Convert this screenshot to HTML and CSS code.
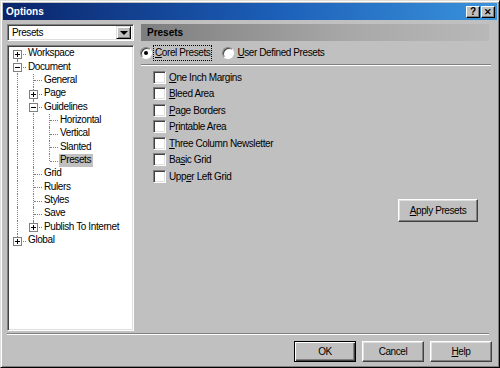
FILE: index.html
```html
<!DOCTYPE html>
<html lang="en">
  <head>
    <meta charset="UTF-8" />
    <meta name="viewport" content="width=device-width, initial-scale=1.0" />
    <title>Options</title>
    <link rel="stylesheet" href="styles.css">
  </head>
  <body>
    <div class="window">
      <div class="titlebar">
        <span class="title">Options</span>
        <div class="caption-btns">
          <span class="cap-btn">?</span>
          <span class="cap-btn cap-close">&#x2715;</span>
        </div>
      </div>

      <div class="content">
        <div class="main">
          <div class="left">
            <div class="combo">
              <span class="combo-text">Presets</span>
              <span class="combo-arrow"><span class="tri"></span></span>
            </div>

            <div class="tree">
              <div class="row"><span class="cell tee first"><span class="box plus"></span></span><span class="label">Workspace</span></div>
              <div class="row"><span class="cell tee"><span class="box minus"></span></span><span class="label">Document</span></div>
              <div class="row"><span class="cell pipe"></span><span class="cell tee"></span><span class="label">General</span></div>
              <div class="row"><span class="cell pipe"></span><span class="cell tee"><span class="box plus"></span></span><span class="label">Page</span></div>
              <div class="row"><span class="cell pipe"></span><span class="cell tee"><span class="box minus"></span></span><span class="label">Guidelines</span></div>
              <div class="row"><span class="cell pipe"></span><span class="cell pipe"></span><span class="cell tee"></span><span class="label">Horizontal</span></div>
              <div class="row"><span class="cell pipe"></span><span class="cell pipe"></span><span class="cell tee"></span><span class="label">Vertical</span></div>
              <div class="row"><span class="cell pipe"></span><span class="cell pipe"></span><span class="cell tee"></span><span class="label">Slanted</span></div>
              <div class="row"><span class="cell pipe"></span><span class="cell pipe"></span><span class="cell end"></span><span class="label selected">Presets</span></div>
              <div class="row"><span class="cell pipe"></span><span class="cell tee"></span><span class="label">Grid</span></div>
              <div class="row"><span class="cell pipe"></span><span class="cell tee"></span><span class="label">Rulers</span></div>
              <div class="row"><span class="cell pipe"></span><span class="cell tee"></span><span class="label">Styles</span></div>
              <div class="row"><span class="cell pipe"></span><span class="cell tee"></span><span class="label">Save</span></div>
              <div class="row"><span class="cell pipe"></span><span class="cell end"><span class="box plus"></span></span><span class="label">Publish To Internet</span></div>
              <div class="row"><span class="cell end"><span class="box plus"></span></span><span class="label">Global</span></div>
            </div>
          </div>

          <div class="right">
            <div class="panel-header">Presets</div>

            <div class="radio-row">
              <label class="radio">
                <span class="radio-circle checked"></span>
                <span class="radio-text focused"><u>C</u>orel Presets</span>
              </label>
              <label class="radio">
                <span class="radio-circle"></span>
                <span class="radio-text"><u>U</u>ser Defined Presets</span>
              </label>
            </div>

            <div class="sep"></div>

            <ul class="check-list">
              <li><span class="checkbox"></span><span><u>O</u>ne Inch Margins</span></li>
              <li><span class="checkbox"></span><span><u>B</u>leed Area</span></li>
              <li><span class="checkbox"></span><span><u>P</u>age Borders</span></li>
              <li><span class="checkbox"></span><span>P<u>r</u>intable Area</span></li>
              <li><span class="checkbox"></span><span><u>T</u>hree Column Newsletter</span></li>
              <li><span class="checkbox"></span><span>Ba<u>s</u>ic Grid</span></li>
              <li><span class="checkbox"></span><span>Upp<u>e</u>r Left Grid</span></li>
            </ul>

            <div class="apply-row">
              <button class="btn apply-btn"><u>A</u>pply Presets</button>
            </div>
          </div>
        </div>

        <div class="sep footer-sep"></div>

        <div class="footer">
          <button class="btn default-btn">OK</button>
          <button class="btn">Cancel</button>
          <button class="btn"><u>H</u>elp</button>
        </div>
      </div>
    </div>
  </body>
</html>
```

FILE: styles.css
```css
body {
  margin: 0;
  padding: 0;
  background: #c0c0c0;
  font-family: "Liberation Sans", Arial, sans-serif;
  font-size: 10px;
  letter-spacing: -0.4px;
  color: #000;
}

.window {
  width: 500px;
  height: 368px;
  box-sizing: border-box;
  background: #c0c0c0;
  border: 1px solid;
  border-color: #dfdfdf #000 #000 #dfdfdf;
  box-shadow: inset 1px 1px #fff, inset -1px -1px #808080;
  padding: 2px;
  display: flex;
  flex-direction: column;
}

.titlebar {
  height: 17px;
  background: linear-gradient(to right, #0a246a, #1c5fb8 55%, #3a93dc);
  display: flex;
  align-items: center;
  justify-content: space-between;
  padding: 0 2px 0 2px;
}

.title {
  color: #fff;
  font-weight: bold;
  letter-spacing: 0;
  padding-left: 1px;
}

.caption-btns {
  display: flex;
}

.cap-btn {
  width: 14px;
  height: 12px;
  box-sizing: border-box;
  background: #c0c0c0;
  border: 1px solid;
  border-color: #fff #000 #000 #fff;
  box-shadow: inset -1px -1px #808080;
  font-size: 10px;
  font-weight: bold;
  line-height: 10px;
  text-align: center;
  letter-spacing: 0;
}

.cap-close {
  margin-left: 1px;
  font-size: 9px;
}

.content {
  flex: 1;
  display: flex;
  flex-direction: column;
  padding: 4px 6px 0 4px;
}

.main {
  display: flex;
  gap: 7px;
  height: 307px;
}

.left {
  width: 127px;
  display: flex;
  flex-direction: column;
  gap: 4px;
}

/* sunken controls */
.combo,
.tree {
  box-sizing: border-box;
  background: #fff;
  border: 1px solid;
  border-color: #808080 #fff #fff #808080;
  box-shadow: inset 1px 1px #404040, inset -1px -1px #dfdfdf;
}

.combo {
  height: 17px;
  display: flex;
  align-items: center;
  padding: 2px;
}

.combo-text {
  flex: 1;
  padding-left: 2px;
}

.combo-arrow {
  width: 15px;
  height: 13px;
  box-sizing: border-box;
  background: #c0c0c0;
  border: 1px solid;
  border-color: #dfdfdf #000 #000 #dfdfdf;
  box-shadow: inset 1px 1px #fff, inset -1px -1px #808080;
  display: flex;
  align-items: center;
  justify-content: center;
}

.tri {
  width: 0;
  height: 0;
  border-left: 4px solid transparent;
  border-right: 4px solid transparent;
  border-top: 4px solid #000;
}

.tree {
  flex: 1;
  padding: 1px 2px;
}

.row {
  height: 13.36px;
  display: flex;
  align-items: center;
  white-space: nowrap;
}

.cell {
  position: relative;
  width: 16px;
  height: 100%;
  flex: none;
}

.cell::before,
.cell::after {
  content: "";
  position: absolute;
}

.pipe::before,
.tee::before {
  left: 7px;
  top: 0;
  bottom: 0;
  border-left: 1px dotted #808080;
}

.tee.first::before {
  top: 50%;
}

.end::before {
  left: 7px;
  top: 0;
  height: 50%;
  border-left: 1px dotted #808080;
}

.tee::after,
.end::after {
  left: 8px;
  top: 50%;
  width: 8px;
  border-top: 1px dotted #808080;
}

.box {
  position: absolute;
  left: 3px;
  top: calc(50% - 4px);
  width: 9px;
  height: 9px;
  box-sizing: border-box;
  background: #fff;
  border: 1px solid #808080;
  z-index: 1;
}

.box::before,
.box::after {
  content: "";
  position: absolute;
  background: #000;
}

.box::before {
  left: 1px;
  top: 3px;
  width: 5px;
  height: 1px;
}

.plus::after {
  left: 3px;
  top: 1px;
  width: 1px;
  height: 5px;
}

.label {
  margin-left: 1px;
  padding: 0 2px 1px 1px;
  line-height: 12px;
}

.selected {
  background: #c0c0c0;
}

.right {
  flex: 1;
  display: flex;
  flex-direction: column;
}

.panel-header {
  height: 17px;
  margin-right: 2px;
  background: linear-gradient(to right, #7e7e7e, #a8a8a8 60%, #b8b8b8);
  font-weight: bold;
  letter-spacing: 0;
  line-height: 17px;
  padding-left: 6px;
}

.radio-row {
  display: flex;
  gap: 10px;
  height: 16px;
  margin-top: 4px;
  margin-left: -1px;
}

.radio {
  display: flex;
  align-items: center;
  gap: 1px;
}

.radio-circle {
  width: 12px;
  height: 12px;
  box-sizing: border-box;
  border-radius: 50%;
  background: #fff;
  border: 1px solid;
  border-color: #808080 #fff #fff #808080;
  box-shadow: inset 1px 1px #404040;
  display: flex;
  align-items: center;
  justify-content: center;
}

.radio-circle.checked::after {
  content: "";
  width: 4px;
  height: 4px;
  border-radius: 50%;
  background: #000;
}

.radio-text {
  padding: 1px 1px 2px 1px;
  border: 1px solid transparent;
}

.focused {
  border: 1px dotted #000;
}

.sep {
  height: 0;
  border-top: 1px solid #808080;
  border-bottom: 1px solid #fff;
}

.right .sep {
  margin-top: 3px;
}

.check-list {
  list-style: none;
  margin: 3px 0 0 0;
  padding: 0 0 0 12px;
}

.check-list li {
  height: 16.5px;
  display: flex;
  align-items: center;
  gap: 3px;
}

.checkbox {
  width: 13px;
  height: 13px;
  box-sizing: border-box;
  background: #fff;
  border: 1px solid;
  border-color: #808080 #fff #fff #808080;
  box-shadow: inset 1px 1px #404040, inset -1px -1px #dfdfdf;
}

.apply-row {
  display: flex;
  justify-content: flex-end;
  margin-top: 14px;
  padding-right: 13px;
}

.btn {
  font-family: "Liberation Sans", Arial, sans-serif;
  font-size: 10px;
  letter-spacing: -0.4px;
  color: #000;
  background: #c0c0c0;
  border: 1px solid;
  border-color: #fff #404040 #404040 #fff;
  box-shadow: inset -1px -1px #808080, inset 1px 1px #dfdfdf;
  padding: 0;
  height: 21px;
  width: 62px;
}

.apply-btn {
  width: 80px;
  height: 23px;
}

.footer-sep {
  margin-top: 2px;
  margin-right: 2px;
}

.footer {
  display: flex;
  justify-content: flex-end;
  gap: 6px;
  margin-top: 6px;
  margin-right: -1px;
}

.default-btn {
  border: 1px solid #000;
  box-shadow: inset 1px 1px #fff, inset -1px -1px #404040, inset -2px -2px #808080;
}
```
